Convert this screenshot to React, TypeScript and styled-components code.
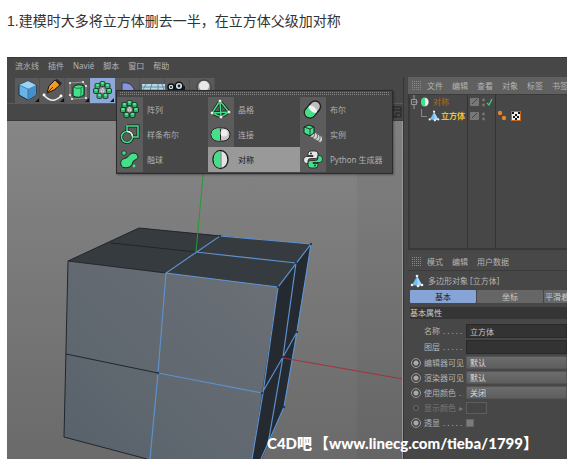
import React from "react";
import styled, { createGlobalStyle } from "styled-components";

const GlobalStyle = createGlobalStyle`
  *, *::before, *::after { box-sizing: border-box; }
  body {
    margin: 0;
    background: #fff;
    font-family: "Liberation Sans", "Noto Sans CJK SC", sans-serif;
  }
  button, input, select { font: inherit; color: inherit; margin: 0; padding: 0; border: 0; background: none; }
`;

const Page = styled.main`
  display: flex;
  flex-direction: column;
  min-height: 100vh;
  padding-left: 7px;
  overflow: hidden;
`;

const Caption = styled.p`
  margin: 0;
  padding: 10px 0 25px;
  font-size: 14px;
  line-height: 22px;
  color: #333;
  white-space: nowrap;
`;

const AppWindow = styled.section`
  position: relative;
  flex: 1;
  display: flex;
  flex-direction: column;
  overflow: hidden;
  background: #474747;
  color: #b4b4b4;
  font-family: "Noto Sans", "Noto Sans CJK SC", sans-serif;
  font-size: 8px;
  line-height: 12px;
  white-space: nowrap;
`;

const MenuBar = styled.nav`
  display: flex;
  gap: 9px;
  height: 20px;
  padding: 2px 8px 5px;
  border-top: 1px solid #383838;
`;

const MenuButton = styled.button`
  line-height: 12px;
`;

const Workspace = styled.div`
  flex: 1;
  display: flex;
  min-height: 0;
`;

const Stage = styled.div`
  position: relative;
  flex: 1;
  min-width: 0;
  display: flex;
  flex-direction: column;
`;

const Toolbar = styled.div`
  display: flex;
  height: 27px;
  padding: 1px 8px;
  border-bottom: 1px solid #5a5a5a;
`;

const ToolButton = styled.button<{ $active?: boolean }>`
  display: flex;
  width: 25px;
  height: 25px;
  background: ${(p) => (p.$active ? "#8ea9d8" : "#5a5a5a")};
  border-right: 1px solid ${(p) => (p.$active ? "#8ea9d8" : "#505050")};
  svg { width: 25px; height: 25px; flex: none; }
`;

const ViewHeader = styled.div`
  display: flex;
  justify-content: flex-end;
  align-items: center;
  height: 17px;
  padding-right: 1px;
  border-bottom: 1px solid #3a3a3a;
  svg { width: 10px; height: 12px; }
`;

const Viewport = styled.div`
  flex: 1;
  min-height: 0;
  overflow: hidden;
  background: linear-gradient(#868686, #6a6a6a);
  border-right: 1px solid #999;
  svg { display: block; width: 100%; height: 338px; }
`;

const Popup = styled.div`
  position: absolute;
  top: 13px;
  left: 109px;
  width: 277px;
  padding: 1px 0 0;
  background: #474747;
  border: 1px solid #2c2c2c;
  box-shadow: 1px 1px 2px #0005;
`;

const Grip = styled.div`
  height: 3px;
  margin: 0 3px 2px;
  background: radial-gradient(circle at 0 0, #858585 1px, transparent 1px) 0 0 / 2px 2px;
`;

const PopupGrid = styled.div`
  display: grid;
  grid-template-columns: 91px 92px 1fr;
  grid-auto-rows: 25px;
  padding-bottom: 1px;
`;

const PopupItem = styled.button<{ $active?: boolean }>`
  display: flex;
  align-items: center;
  gap: 4px;
  text-align: left;
  background: ${(p) => (p.$active ? "#999" : "none")};
  color: ${(p) => (p.$active ? "#10131c" : "#b0b0b0")};
  svg { width: 26px; height: 25px; flex: none; background: ${(p) => (p.$active ? "none" : "#5c5c5c")}; }
`;

const Side = styled.aside`
  width: 164px;
  flex: none;
  padding-left: 4px;
  overflow: hidden;
  background: #474747;
  border-left: 1px solid #353535;
`;

const PanelMenu = styled.nav<{ $light?: boolean }>`
  display: flex;
  align-items: center;
  gap: 9px;
  height: 18px;
  padding-left: 4px;
  background: ${(p) => (p.$light ? "#606060" : "#484848")};
  border-bottom: 1px solid #3b3b3b;
`;

const DotGrid = styled.span`
  flex: none;
  width: 9px;
  height: 9px;
  margin-right: -3px;
  background: radial-gradient(circle at 0 0, #888 1px, transparent 1px) 0 0 / 2px 2px;
`;

const ObjectTree = styled.div`
  height: 155px;
  margin-bottom: 3px;
  border: 1px solid #393939;
  border-width: 0 0 2px 2px;
  background: linear-gradient(90deg, transparent 57px, #333 57px 58px, transparent 58px 85px, #333 85px 86px, transparent 86px);
`;

const TreeRow = styled.div<{ $selected?: boolean }>`
  display: grid;
  grid-template-columns: 58px 28px 1fr;
  align-items: center;
  height: 14px;
  color: ${(p) => (p.$selected ? "#f2c02e" : "#b36b16")};
  font-weight: ${(p) => (p.$selected ? 700 : 400)};
  svg { display: block; height: 14px; }
`;

const TreeName = styled.div`
  display: flex;
  align-items: center;
  gap: 1px;
`;

const ObjectTitle = styled.h2`
  display: flex;
  align-items: center;
  gap: 4px;
  margin: 0;
  height: 19px;
  padding-left: 2px;
  font-size: 8px;
  font-weight: 400;
  svg { width: 14px; height: 14px; }
`;

const Tabs = styled.div`
  display: flex;
  gap: 1px;
  padding: 0 0 4px 2px;
`;

const Tab = styled.button<{ $active?: boolean }>`
  width: 66px;
  flex: none;
  height: 13px;
  line-height: 12px;
  border-radius: 1px;
  background: ${(p) => (p.$active ? "#87a4d6" : "#666")};
  color: ${(p) => (p.$active ? "#101a30" : "#c8c8c8")};
`;

const WideTab = styled(Tab)`
  padding-left: 1px;
  text-align: left;
`;

const SectionTitle = styled.h3`
  margin: 0 0 4px 2px;
  height: 12px;
  background: #353535;
  color: #ccc;
  font-size: 8px;
  line-height: 12px;
  font-weight: 400;
`;

const Field = styled.div<{ $dim?: boolean; $tall?: boolean }>`
  display: grid;
  grid-template-columns: 12px 40px 1fr;
  column-gap: 2px;
  align-items: center;
  height: ${(p) => (p.$tall ? 16 : 15)}px;
  padding-left: 2px;
  color: ${(p) => (p.$dim ? "#777" : "#b4b4b4")};
`;

const FieldLabel = styled.label`
  display: flex;
  overflow: hidden;
`;

const Leader = styled.span`
  margin-left: 3px;
  overflow: hidden;
`;

const Radio = styled.input<{ $small?: boolean }>`
  appearance: none;
  justify-self: center;
  width: ${(p) => (p.$small ? 6 : 10)}px;
  height: ${(p) => (p.$small ? 6 : 10)}px;
  border: 1px solid ${(p) => (p.$small ? "#707070" : "#999")};
  border-radius: 50%;
  background: ${(p) => (p.$small ? "#3c3c3c" : "radial-gradient(circle, #aaa 0 2px, #444 3px)")};
`;

const TextInput = styled.input`
  width: 100%;
  height: 14px;
  padding-left: 3px;
  background: #333;
  border: 1px solid #292929;
  color: #c4c4c4;
`;

const Select = styled.select`
  appearance: none;
  width: 100%;
  height: 13px;
  padding-left: 3px;
  line-height: 12px;
  background: linear-gradient(#6c6c6c, #5e5e5e);
  border: 1px solid #555;
  border-radius: 1px;
  color: #dcdcdc;
`;

const Swatch = styled.button`
  width: 21px;
  height: 12px;
  border: 1px solid #5e5e5e;
  background: #454545;
`;

const Checkbox = styled.input`
  appearance: none;
  width: 8px;
  height: 8px;
  border: 1px solid #666;
  background: #7b7b7b;
`;

const Watermark = styled.div`
  position: absolute;
  left: 260px;
  bottom: 6px;
  display: flex;
  gap: 2px;
  color: #fff;
  font-family: Lato, "Noto Sans CJK SC", sans-serif;
  font-size: 15px;
  line-height: 20px;
  font-weight: 900;
`;

const G = "#43e08a";
const K = "#182019";

const Blossom = () => (
  <>
    {[[12.5, 6], [17.5, 8], [19, 13], [15.5, 18], [9.5, 18], [6, 13], [7.5, 8]].map(([x, y], i) => (
      <g key={i}>
        <rect x={x - 2.5} y={y - 2.5} width="5" height="5" rx="1.3" fill="#2db56a" stroke={K} strokeWidth=".8" />
        <path d={`M${x - 2} ${y - 1} l2 -1.2 2 1.2 -2 1.2z`} fill="#58ee9c" />
      </g>
    ))}
    <path d="M10 11l2.5-1.5L15 11v3.2l-2.5 1.3-2.5-1.3z" fill="#d8d8d8" stroke="#555" strokeWidth=".6" />
    <path d="M10 11l2.5 1.2L15 11M12.5 12.2v3.3" stroke="#888" strokeWidth=".6" fill="none" />
  </>
);

const Corner = () => <path d="M24 20v4h-4z" fill="#111" />;

const toolIcons: { name: string; art: React.ReactNode; active?: boolean }[] = [
  { name: "立方体", art: <><path d="M4 7l9-4 8 4v10l-8 5-9-5z" fill="#67b3ea" stroke="#17324a" /><path d="M4 7l9-4 8 4-8 4z" fill="#9bd2f5" /><path d="M13 11l8-4v10l-8 5z" fill="#478fc9" /><path d="M4 7l9 4v11" fill="none" stroke="#2d6590" strokeWidth=".7" /><Corner /></> },
  { name: "画笔", art: <><path d="M4 17q8 10 17 1" fill="none" stroke="#eee" strokeWidth="1.5" /><path d="M7 15l2-7 6-6 5 5-6 5z" fill="#f49a26" stroke="#171717" /><path d="M15 2l2-1 5 4-2 3z" fill="#292929" /><path d="M7 15l6-6" stroke="#4a2b08" /><circle cx="4" cy="17" r="1.4" fill="#fff" /><circle cx="21" cy="18" r="1.4" fill="#fff" /><Corner /></> },
  { name: "细分曲面", art: <><path d="M5 5l13-1 3 4v12l-14 1-2-4z" fill="none" stroke="#aaa" strokeWidth=".7" /><path d="M8 9q5-4 11-1v9q-5 4-11 1z" fill={G} stroke={K} /><path d="M8 9q3 2 8 1l3-2M16 10v9" fill="none" stroke="#168347" />{[[5, 5], [18, 4], [21, 8], [5, 17], [7, 21], [21, 20]].map(([x, y]) => <circle key={`${x}-${y}`} cx={x} cy={y} r="1.1" fill="#eee" />)}<Corner /></> },
  { name: "阵列", active: true, art: <><Blossom /><Corner /></> },
  { name: "变形器", art: <path d="M7 17V5q9-2 13 8l-3 6z" fill="#8795dc" stroke="#30375a" /> },
  { name: "地面", art: <><path d="M2 6h23v13H2z" fill="#b9d9e6" /><path d="M2 9h23M2 12h23M6 6l-3 6M12 6l-2 6M18 6v6M22 6l2 6" stroke="#5f8da5" /></> },
  { name: "摄像机", art: <><rect x="3" y="8" width="17" height="12" fill="#151a22" /><circle cx="6" cy="9" r="3" fill="#c9e4f3" stroke="#111" strokeWidth="1.5" /><circle cx="14" cy="8" r="3.8" fill="#c9e4f3" stroke="#111" strokeWidth="1.5" /><circle cx="6" cy="9" r="1.1" fill="#222" /><circle cx="14" cy="8" r="1.4" fill="#222" /></> },
  { name: "灯光", art: <><circle cx="14" cy="9" r="7" fill="#999" stroke="#333" /><circle cx="14" cy="8" r="5" fill="#e9e9e9" /></> },
];

const PY = "M13 4h-2q-3 0-3 3v1.500h5v1H6.500q-3 0-3 3.500t3 3.500H8v-2.500q0-2.500 2.500-2.500h5q2.500 0 2.500-2.500V7q0-3-3-3z";

const generators: { name: string; art: React.ReactNode; active?: boolean }[] = [
  { name: "阵列", art: <Blossom /> },
  { name: "晶格", art: <><path d="M12 4L4 16l9 4 8-5zL13 20M4 16l17-1" fill="none" stroke={K} strokeWidth="3" /><path d="M12 4L4 16l9 4 8-5zL13 20M4 16l17-1" fill="none" stroke={G} strokeWidth="1.5" />{[[12, 4], [4, 16], [13, 20], [21, 15]].map(([x, y]) => <circle key={x} cx={x} cy={y} r="1.8" fill="#eee" stroke="#444" strokeWidth=".5" />)}</> },
  { name: "布尔", art: <g transform="rotate(40 12.5 12.5)"><rect x="7" y="3" width="11" height="19" rx="5.500" fill="#bebebe" stroke="#222" strokeWidth="1.5" /><path d="M7.700 12v4.500a4.800 4.800 0 0 0 9.600 0V12z" fill={G} /><ellipse cx="12.5" cy="12" rx="4.800" ry="2.600" fill="#f0f0f0" /></g> },
  { name: "样条布尔", art: <><path d="M10 4h11v11h-5M10 4v5" fill="none" stroke={K} strokeWidth="3" /><circle cx="10" cy="15" r="5.5" fill="none" stroke={K} strokeWidth="3" /><path d="M16 15h5V4H10v5" fill="none" stroke={G} strokeWidth="1.5" /><circle cx="10" cy="15" r="5.5" fill="none" stroke={G} strokeWidth="1.5" /><path d="M10 9.5q5 0 5.5 5" fill="none" stroke="#eee" strokeWidth="1.5" /></> },
  { name: "连接", art: <><rect x="3" y="6" width="19" height="13" rx="6.5" fill="#c9c9c9" stroke="#222" /><path d="M12 6.5H9.5a6 6 0 0 0 0 12H12z" fill={G} /><path d="M12.5 7v11" stroke="#222" strokeWidth="1" /><circle cx="16" cy="11" r="3.5" fill="#eee" /></> },
  { name: "实例", art: <>{[20, 17.5, 15, 12].map((x) => <ellipse key={x} cx={x} cy={x * 0.6 + 5} rx="2.6" ry="3.400" fill="#d4d4d4" stroke="#444" strokeWidth=".7" />)}<path d="M4 5l5-2 5 2v6l-4 3-6-3z" fill={G} stroke={K} /><path d="M4 5l6 2 4-2M10 7v7" fill="none" stroke={K} strokeWidth=".8" /></> },
  { name: "融球", art: <><path d="M9 11c3-1 3-5 8-5 5 1 5 6 1 7-3 1-2 4-4 6s-9 3-10-1 1-6 5-7z" fill={G} stroke={K} /><circle cx="7" cy="6" r="2.2" fill={G} stroke={K} strokeWidth=".7" /><circle cx="17" cy="19" r="1.4" fill={G} /></> },
  { name: "对称", active: true, art: <><ellipse cx="12.5" cy="12.5" rx="7.5" ry="9" fill="#e4e4e4" stroke="#222" strokeWidth="1.5" /><path d="M12.5 4.2q-6.8 0-6.8 8.3t6.8 8.3z" fill={G} /><path d="M13 4v17" stroke="#555" strokeWidth=".8" /></> },
  { name: "Python 生成器", art: <><path d={PY} fill="#e7e7e7" stroke="#222" strokeWidth=".8" /><path d={PY} transform="rotate(180 13 12.5)" fill={G} stroke="#222" strokeWidth=".8" /><circle cx="11" cy="6.500" r=".9" fill="#222" /><circle cx="15" cy="18.500" r=".9" fill="#222" /></> },
];

const Pyramid = () => (
  <svg viewBox="0 0 14 14" width="12" aria-hidden="true">
    <path d="M7 2l5 9-4 1-6-1z" fill="#74c1f1" stroke="#2d6789" strokeWidth=".5" />
    <path d="M7 2l5 9-4 1z" fill="#a9daf5" />
    {[[7, 2], [12, 11], [8, 12], [2, 11]].map(([x, y]) => <circle key={x} cx={x} cy={y} r="1.3" fill="#f0f0f0" />)}
  </svg>
);

const Layers = ({ check }: { check?: boolean }) => (
  <svg viewBox="0 0 26 14" width="26" aria-hidden="true">
    <rect x="2" y="3" width="9" height="8" rx="1" fill="#777" />
    <path d="M4 9l5-5" stroke="#444" />
    <circle cx="15.5" cy="5" r="1.4" fill="#777" /><circle cx="15.5" cy="10" r="1.4" fill="#777" />
    {check && <path d="M19 8l2 2 3-6" fill="none" stroke="#38d17b" strokeWidth="1.3" />}
  </svg>
);

const Scene = () => (
  <svg viewBox="7 121 396 338" preserveAspectRatio="xMinYMin slice" role="img" aria-label="立方体">
    <defs>
      <linearGradient id="front" x1="1" y1="0" x2="0" y2="1"><stop stopColor="#6c7076" /><stop offset="1" stopColor="#58626b" /></linearGradient>
    </defs>
    <path d="M357 121h46v338h-46z" fill="#000" opacity=".04" />
    <path d="M139 228L311 244 278 287 68 261z" fill="#353b3f" />
    <path d="M68 261L278 287 252 459 147 459 64 437z" fill="url(#front)" />
    <path d="M278 287L311 244 284 407 262 459 252 459z" fill="#252a31" />
    <g fill="none" stroke="#20262b">
      <path d="M220 236L139 228 68 261 64 437 147 459M68 261L166 273M111 243L196 252M66 354L158 373" />
    </g>
    <g fill="none" stroke="#5d91ce" strokeWidth="1.2">
      <path d="M220 236L311 244 278 287 166 273zM196 252L296 263M166 273L158 373 150 459M158 373L262 393M278 287L263 393 252 459M311 244L297 332 284 407 261 459M296 263L283 357 268 444M262 393L283 357 297 332" />
    </g>
    {[[220, 236], [311, 244], [296, 263], [278, 287], [262, 393], [283, 357], [297, 332], [284, 407], [158, 373]].map(([x, y]) => <circle key={`${x}-${y}`} cx={x} cy={y} r="1.2" fill="#233d5e" />)}
    <path d="M208 121L196 252" stroke="#279a32" />
    <path d="M283 358L403 379" stroke="#a43238" />
  </svg>
);

const selects = [
  { id: "editor", label: "编辑器可见", value: "默认" },
  { id: "render", label: "渲染器可见", value: "默认" },
  { id: "usecolor", label: "使用颜色", value: "关闭", dots: ". ." },
];

export default function App() {
  return (
    <>
      <GlobalStyle />
      <Page>
        <Caption>1.建模时大多将立方体删去一半，在立方体父级加对称</Caption>
        <AppWindow>
          <MenuBar>
            {["流水线", "插件", "Navié", "脚本", "窗口", "帮助"].map((m) => <MenuButton key={m}>{m}</MenuButton>)}
          </MenuBar>
          <Workspace>
            <Stage>
              <Toolbar>
                {toolIcons.map((t) => (
                  <ToolButton key={t.name} $active={t.active} aria-label={t.name}>
                    <svg viewBox="0 0 25 25">{t.art}</svg>
                  </ToolButton>
                ))}
              </Toolbar>
              <ViewHeader>
                <svg viewBox="0 0 10 12" aria-hidden="true"><path d="M1 1h8v10H1zM1 4h8M4 11V7h4" fill="none" stroke="#222" /></svg>
              </ViewHeader>
              <Viewport><Scene /></Viewport>
              <Popup>
                <Grip />
                <PopupGrid>
                  {generators.map((g) => (
                    <PopupItem key={g.name} $active={g.active}>
                      <svg viewBox="0 0 26 25" aria-hidden="true">{g.art}</svg>
                      {g.name}
                    </PopupItem>
                  ))}
                </PopupGrid>
              </Popup>
            </Stage>
            <Side>
              <PanelMenu $light>
                <DotGrid />
                {["文件", "编辑", "查看", "对象", "标签", "书签"].map((m) => <MenuButton key={m}>{m}</MenuButton>)}
              </PanelMenu>
              <ObjectTree>
                <TreeRow>
                  <TreeName>
                    <svg viewBox="0 0 22 14" width="22" aria-hidden="true">
                      <path d="M4 0v4M1.5 4.5h5v5h-5zM3 7h5M4 10v4" fill="none" stroke="#999" />
                      <ellipse cx="15" cy="7" rx="4" ry="4.5" fill="#eee" stroke="#333" strokeWidth=".6" />
                      <path d="M15 2.5q-4 0-4 4.5t4 4.5z" fill={G} />
                    </svg>
                    对称
                  </TreeName>
                  <Layers check />
                </TreeRow>
                <TreeRow $selected>
                  <TreeName>
                    <svg viewBox="0 0 17 14" width="17" aria-hidden="true"><path d="M11.5 0v7.5H17" fill="none" stroke="#888" /></svg>
                    <Pyramid />
                    立方体
                  </TreeName>
                  <Layers />
                  <svg viewBox="0 0 28 14" width="28" aria-hidden="true">
                    <circle cx="4" cy="4" r="2.2" fill="#e4852b" /><circle cx="8" cy="9" r="2.2" fill="#e4852b" />
                    <rect x="15.5" y="2.5" width="9" height="9" fill="#eee" stroke="#c66a22" />
                    <path d="M16 3h2v2h-2zM22 3h2v2h-2zM19 5h2v2h-2zM17 7h2v2h-2zM21 7h2v2h-2zM19 9h2v2h-2z" fill="#111" />
                  </svg>
                </TreeRow>
              </ObjectTree>
              <PanelMenu>
                <DotGrid />
                {["模式", "编辑", "用户数据"].map((m) => <MenuButton key={m}>{m}</MenuButton>)}
              </PanelMenu>
              <ObjectTitle><Pyramid />多边形对象 [立方体]</ObjectTitle>
              <Tabs>
                <Tab $active>基本</Tab>
                <Tab>坐标</Tab>
                <WideTab>平滑着</WideTab>
              </Tabs>
              <SectionTitle>基本属性</SectionTitle>
              <Field $tall>
                <span />
                <FieldLabel htmlFor="name">名称<Leader>. . . . .</Leader></FieldLabel>
                <TextInput id="name" defaultValue="立方体" />
              </Field>
              <Field $tall>
                <span />
                <FieldLabel htmlFor="layer">图层<Leader>. . . . .</Leader></FieldLabel>
                <TextInput id="layer" />
              </Field>
              {selects.map((s) => (
                <Field key={s.id}>
                  <Radio type="radio" aria-label={`${s.label}动画`} />
                  <FieldLabel htmlFor={s.id}>{s.label}{s.dots && <Leader>{s.dots}</Leader>}</FieldLabel>
                  <Select id={s.id} defaultValue={s.value}><option>{s.value}</option></Select>
                </Field>
              ))}
              <Field $dim>
                <Radio type="radio" $small aria-label="显示颜色动画" />
                <FieldLabel htmlFor="color">显示颜色<Leader>▸</Leader></FieldLabel>
                <Swatch id="color" />
              </Field>
              <Field>
                <Radio type="radio" aria-label="透显动画" />
                <FieldLabel htmlFor="xray">透显<Leader>. . . . .</Leader></FieldLabel>
                <Checkbox id="xray" type="checkbox" />
              </Field>
            </Side>
          </Workspace>
          <Watermark><span>C4D吧</span><span>【www.linecg.com/tieba/1799】</span></Watermark>
        </AppWindow>
      </Page>
    </>
  );
}
